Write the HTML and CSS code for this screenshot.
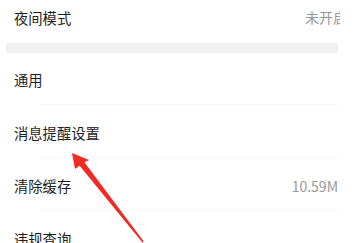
FILE: index.html
```html
<!DOCTYPE html>
<html lang="zh-CN">
<head>
<meta charset="utf-8">
<link rel="stylesheet" href="styles.css">
</head>
<body>
<div class="page">
  <div class="row first">
    <span class="label">夜间模式</span>
    <span class="value clipped">未开启</span>
  </div>
  <div class="band"></div>
  <div class="row line">
    <span class="label">通用</span>
  </div>
  <div class="row line">
    <span class="label">消息提醒设置</span>
  </div>
  <div class="row line">
    <span class="label">清除缓存</span>
    <span class="value">10.59M</span>
  </div>
  <div class="row">
    <span class="label">违规查询</span>
  </div>
</div>
<svg class="arrow" width="358" height="243" viewBox="0 0 358 243">
  <polygon points="72,153 89,160 84.4,162.2 143.8,241.6 142.4,242.6 79.6,165.8 75,169" fill="#ee2b24"/>
</svg>
</body>
</html>
```
FILE: styles.css
```css
html, body {
  margin: 0;
  padding: 0;
  background: #ffffff;
  overflow: hidden;
  height: 243px;
}
body {
  position: relative;
  font-family: "Noto Sans CJK SC", "Noto Sans", sans-serif;
}
.page {
  width: 340px;
  overflow: hidden;
  background: #ffffff;
}
.row {
  display: flex;
  align-items: center;
  justify-content: space-between;
  height: 53px;
  padding: 0 2px 0 14px;
  box-sizing: border-box;
  position: relative;
}
.row.first {
  height: 34px;
  margin-bottom: 9px;
}
.row.line::after {
  content: "";
  position: absolute;
  left: 40px;
  right: 2px;
  bottom: 1px;
  height: 1px;
  background: #f7f7f7;
}
.label {
  font-size: 14.3px;
  color: #1e1e1e;
  white-space: nowrap;
}
.value {
  font-size: 14px;
  color: #999999;
  white-space: nowrap;
}
.value.clipped {
  margin-right: -9px;
}
.band {
  height: 10px;
  margin: 0 2px 0 6px;
  background: #f1f1f1;
  border-radius: 3px;
}
.arrow {
  position: absolute;
  left: 0;
  top: 0;
}
```
